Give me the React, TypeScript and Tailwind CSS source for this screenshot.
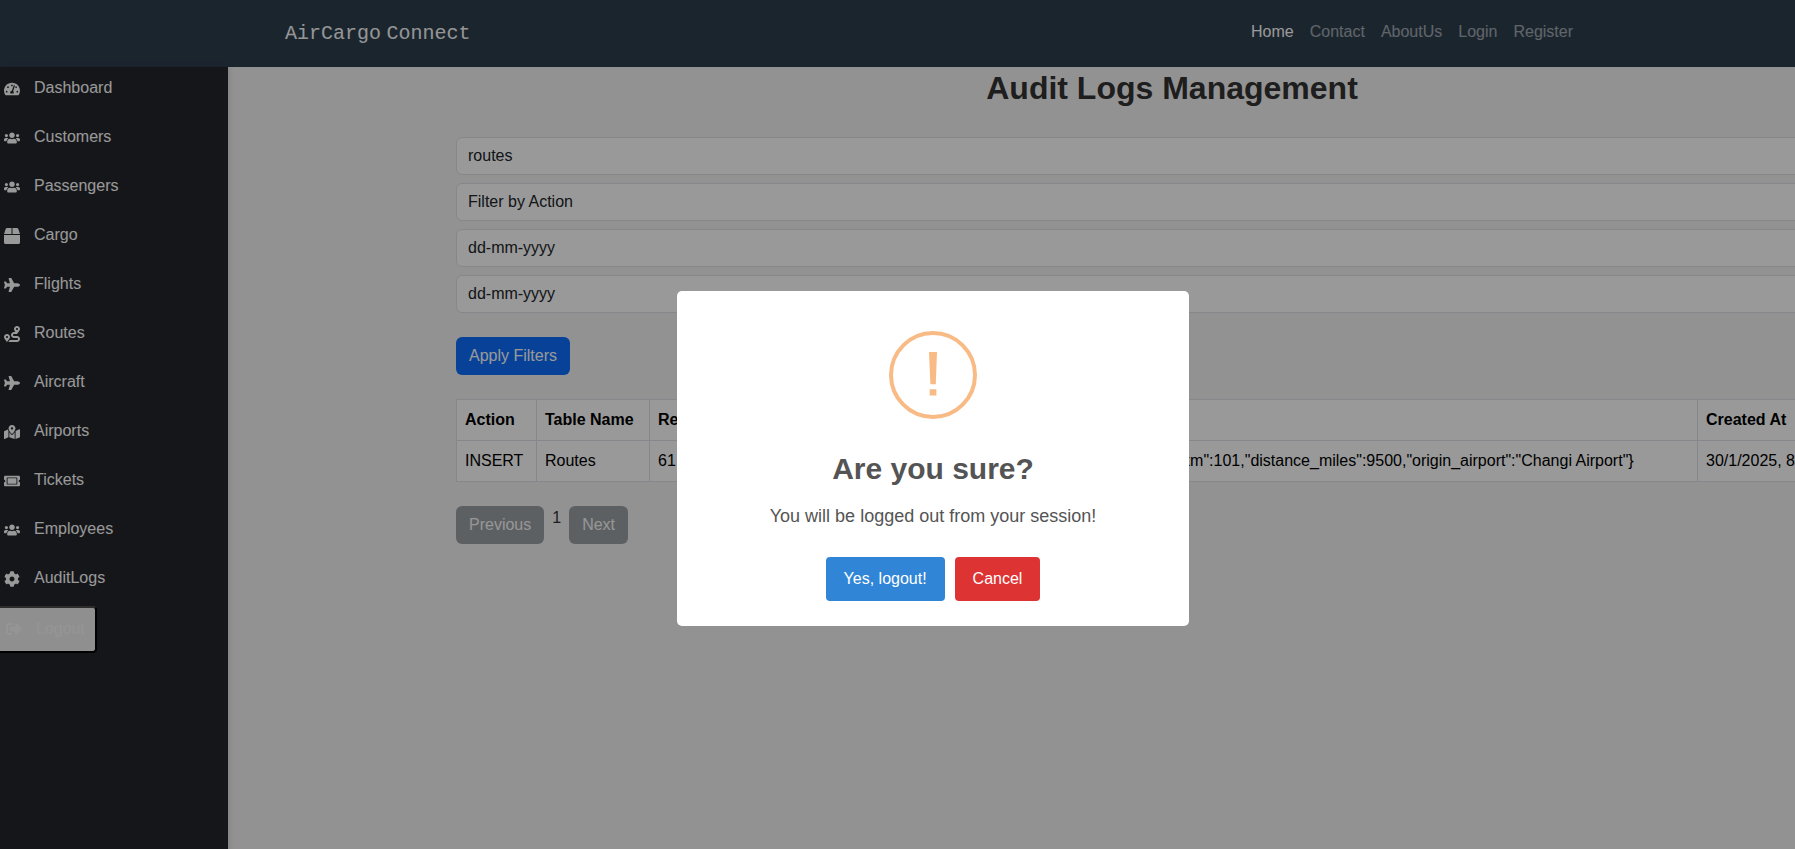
import type { ReactNode } from "react";
import { FaBox, FaCog, FaMapMarkedAlt, FaPlane, FaRoute, FaSignOutAlt, FaTachometerAlt, FaTicketAlt, FaUsers } from "react-icons/fa";

const menu: [string, ReactNode][] = [
  ["Dashboard", <FaTachometerAlt />],
  ["Customers", <FaUsers />],
  ["Passengers", <FaUsers />],
  ["Cargo", <FaBox />],
  ["Flights", <FaPlane />],
  ["Routes", <FaRoute />],
  ["Aircraft", <FaPlane />],
  ["Airports", <FaMapMarkedAlt />],
  ["Tickets", <FaTicketAlt />],
  ["Employees", <FaUsers />],
  ["AuditLogs", <FaCog />],
];

const links = ["Contact", "AboutUs", "Login", "Register"];
const field = "h-[38px] w-full appearance-none rounded-md border border-[#dee2e6] bg-white px-[11px] text-[#212529] placeholder:text-[#212529]";
const cell = "border border-[#dee2e6] px-2 text-left whitespace-nowrap";
const pageButton = "h-[38px] rounded-md bg-[#6c757d] px-[13px] text-white opacity-65";

function Header() {
  return (
    <header className="h-[67px] bg-[#2e3e4e]">
      <div className="mx-auto flex h-full max-w-[1320px] items-center justify-between px-3">
        <a href="#" className="pb-0.5 font-['Liberation_Mono',monospace] text-[20px] text-[#f8f9fa]">
          AirCargo<span className="font-['Liberation_Sans',sans-serif]"> </span>Connect
        </a>
        <nav className="flex pb-1">
          <a href="#" className="px-2 text-white">Home</a>
          {links.map((l) => (
            <a key={l} href="#" className="px-2 text-white/55">{l}</a>
          ))}
        </nav>
      </div>
    </header>
  );
}

function Sidebar() {
  return (
    <aside className="w-[228px] shrink-0 bg-[#24262b] text-white shadow-[2px_0_5px_rgba(0,0,0,0.1)]">
      <ul>
        {menu.map(([label, icon]) => (
          <li key={label} className="h-[49px] pt-[9px]">
            <a href="#" className="flex items-center gap-[14px] pl-1 leading-6">
              <span className="pt-0.5">{icon}</span>
              {label}
            </a>
          </li>
        ))}
      </ul>
      <button className="flex h-[47px] w-[97px] items-center gap-[14px] rounded-r-[4px] border-2 border-l-0 border-black border-t-[#4c4c4c] bg-[#efefef] pb-0.5 pl-1.5 text-[#f8f9fa]">
        <FaSignOutAlt />
        Logout
      </button>
    </aside>
  );
}

function AuditLogs() {
  return (
    <main className="-mr-[22px] min-w-0 flex-1 pl-[228px]">
      <h1 className="pt-0.5 text-center text-[32px] leading-[38px] font-bold text-[#333]">Audit Logs Management</h1>
      <form className="mt-[30px]">
        <div className="flex flex-col gap-2">
          <select aria-label="Table" className={field}><option>routes</option></select>
          <select aria-label="Action" className={field}><option>Filter by Action</option></select>
          <input aria-label="Start date" placeholder="dd-mm-yyyy" className={field} />
          <input aria-label="End date" placeholder="dd-mm-yyyy" className={field} />
        </div>
        <button type="button" className="mt-6 h-[38px] rounded-md bg-[#0d6efd] px-[13px] text-white">Apply Filters</button>
      </form>
      <table className="mt-6 w-full table-fixed border-collapse bg-white text-black">
        <colgroup>
          <col className="w-[80px]" />
          <col className="w-[113px]" />
          <col className="w-[117px]" />
          <col />
          <col className="w-[190px]" />
        </colgroup>
        <thead>
          <tr className="h-[41px]">
            <th className={cell}>Action</th>
            <th className={cell}>Table Name</th>
            <th className={cell}>Record ID</th>
            <th className={cell}>New Data</th>
            <th className={cell}>Created At</th>
          </tr>
        </thead>
        <tbody>
          <tr className="h-[41px]">
            <td className={cell}>INSERT</td>
            <td className={cell}>Routes</td>
            <td className={cell}>61</td>
            <td className={cell}>{'{"route_id":61,"destination_airport":"Heathrow","distance_km":101,"distance_miles":9500,"origin_airport":"Changi Airport"}'}</td>
            <td className={cell}>30/1/2025, 8:30:00 pm</td>
          </tr>
        </tbody>
      </table>
      <div className="mt-6 flex items-start gap-2 text-[#333]">
        <button disabled className={pageButton}>Previous</button>
        <span>1</span>
        <button disabled className={pageButton}>Next</button>
      </div>
    </main>
  );
}

function LogoutDialog() {
  return (
    <div className="absolute inset-0 flex items-center justify-center bg-black/40">
      <div role="dialog" aria-modal="true" aria-labelledby="dialog-title" className="flex w-[512px] flex-col items-center rounded-[5px] bg-white pt-10 pb-[25px] text-[#545454]">
        <svg viewBox="0 0 88 88" className="h-[88px] w-[88px]" aria-hidden="true">
          <circle cx="44" cy="44" r="42" fill="none" stroke="#f8bb86" strokeWidth="4" />
          <path d="M40 21h8l-1.2 32.300h-5.400zM40.700 58.300h6.700v6.200h-6.700z" fill="#f8bb86" />
        </svg>
        <h2 id="dialog-title" className="mt-8 text-[30px] leading-9 font-bold">Are you sure?</h2>
        <p className="mt-4 text-[18px] leading-[27px]">You will be logged out from your session!</p>
        <div className="mt-[27px] flex gap-2.5">
          <button className="h-11 rounded-[4px] bg-[#3085d6] px-[18px] text-white">Yes, logout!</button>
          <button className="h-11 rounded-[4px] bg-[#dd3333] px-[18px] text-white">Cancel</button>
        </div>
      </div>
    </div>
  );
}

export default function App() {
  return (
    <div className="h-screen overflow-hidden font-['Liberation_Sans',Arial,sans-serif] text-base">
      <div className="relative flex h-[calc(100%+68px)] w-[calc(100%+71px)] flex-col bg-[#f4f4f4]">
        <Header />
        <div className="flex flex-1">
          <Sidebar />
          <AuditLogs />
        </div>
        <LogoutDialog />
      </div>
    </div>
  );
}
